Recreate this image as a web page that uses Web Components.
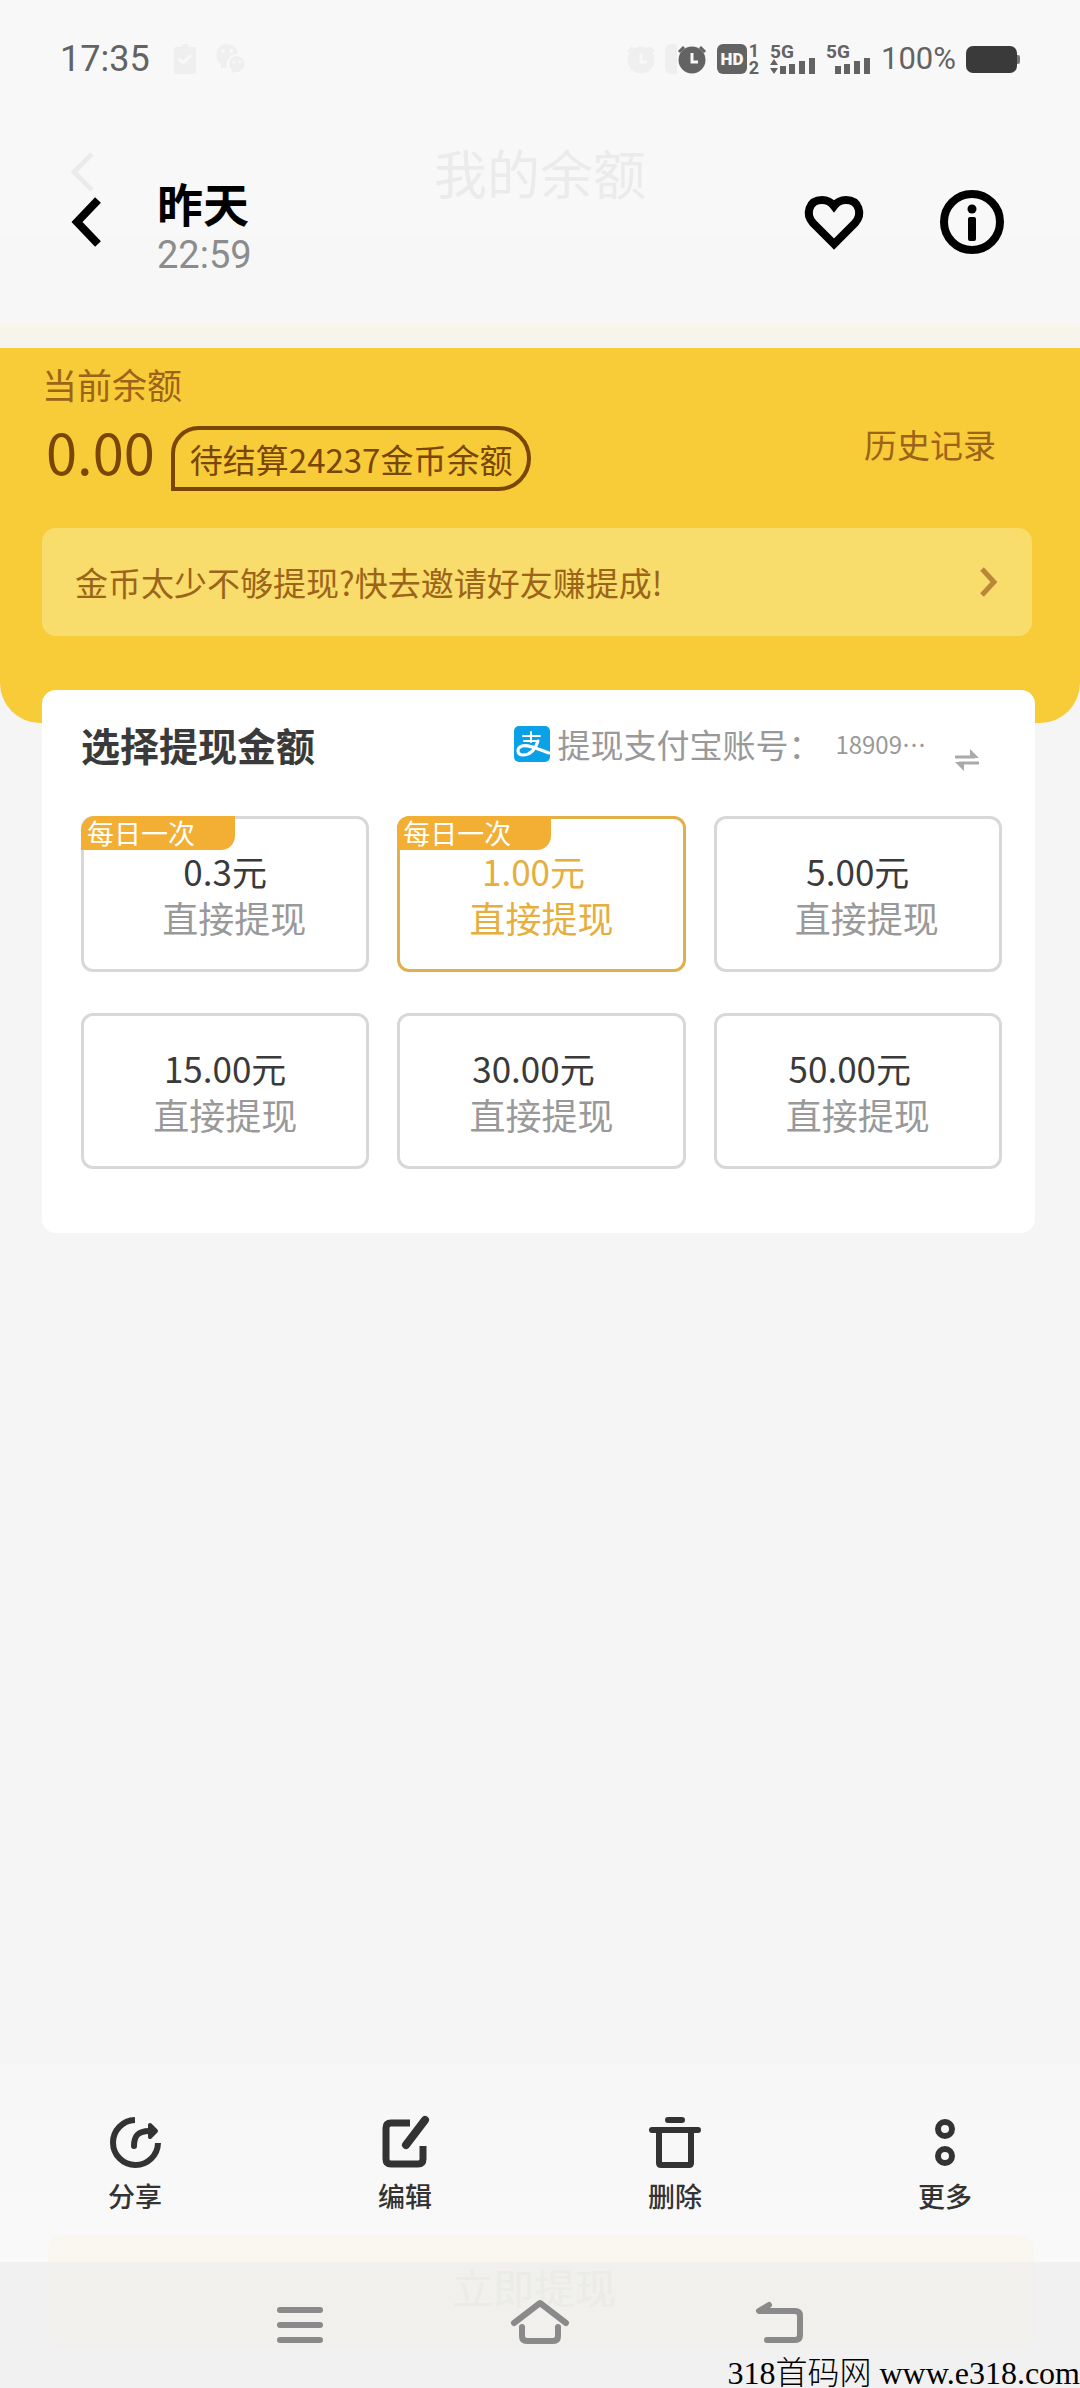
<!DOCTYPE html>
<html lang="zh-CN">
<head>
<meta charset="utf-8">
<meta name="viewport" content="width=device-width, initial-scale=1">
<title>我的余额</title>
<style>
  body {
    margin: 0;
    background: #f5f5f5;
    color: #3a3a3a;
    font-family: "Noto Sans CJK SC", "Noto Sans", sans-serif;
  }
</style>
</head>
<body>
<photo-viewer>
  <status-bar time="17:35" battery="100%"></status-bar>
  <viewer-header day="昨天" time="22:59" ghost="我的余额"></viewer-header>

  <balance-panel amount="0.00">
    <span slot="label">当前余额</span>
    <span slot="pending">待结算24237金币余额</span>
    <span slot="history">历史记录</span>
    <span slot="invite">金币太少不够提现?快去邀请好友赚提成!</span>
  </balance-panel>

  <withdraw-card account="18909…">
    <span slot="title">选择提现金额</span>
    <span slot="account">提现支付宝账号：</span>
    <amount-tile price="0.3元" badge="每日一次" label-end>直接提现</amount-tile>
    <amount-tile price="1.00元" badge="每日一次" price-start selected>直接提现</amount-tile>
    <amount-tile price="5.00元" label-end>直接提现</amount-tile>
    <amount-tile price="15.00元">直接提现</amount-tile>
    <amount-tile price="30.00元" price-start>直接提现</amount-tile>
    <amount-tile price="50.00元" price-start>直接提现</amount-tile>
  </withdraw-card>

  <viewer-footer slot="footer" ghost="立即提现">
    <tool-button icon="share">分享</tool-button>
    <tool-button icon="edit">编辑</tool-button>
    <tool-button icon="trash">删除</tool-button>
    <tool-button icon="more">更多</tool-button>
  </viewer-footer>
  <water-mark slot="footer">318首码网 www.e318.com</water-mark>
</photo-viewer>

<script>
const ALARM = `
  <circle cx="15" cy="16" r="13.5" fill="currentColor"/>
  <path d="M2 8l5-5M28 8l-5-5" stroke="currentColor" stroke-width="3"/>
  <path d="M15 9v9h6" fill="none" stroke="#f8f8f8" stroke-width="3"/>`

// name: [width, height, markup]
const ICONS = {
  ghosts: [51, 30, `${ALARM}
    <path d="M45 0h6v30h-6a6 6 0 0 1-6-6V6a6 6 0 0 1 6-6z" fill="currentColor"/>`],
  alarm: [30, 30, ALARM],
  hd: [43, 30, `
    <rect width="30" height="30" rx="6" fill="currentColor"/>
    <text x="15" y="21" text-anchor="middle" font-size="17" font-weight="900" fill="#f8f8f8">HD</text>
    <text x="37" y="13" text-anchor="middle" font-size="18" font-weight="700" fill="currentColor">1</text>
    <text x="37" y="30" text-anchor="middle" font-size="18" font-weight="700" fill="currentColor">2</text>`],
  signalData: [46, 30, `
    <text x="0" y="14" font-size="19" font-weight="700" fill="currentColor">5G</text>
    <path d="M0 21l4-6 4 6zM0 24h8l-4 6z" fill="currentColor"/>
    <path d="M13 30v-8M22 30v-10M32 30v-13M42 30v-16" stroke="currentColor" stroke-width="6"/>`],
  signal: [45, 30, `
    <text x="0" y="14" font-size="19" font-weight="700" fill="currentColor">5G</text>
    <path d="M12 30v-8M21 30v-10M31 30v-13M41 30v-16" stroke="currentColor" stroke-width="6"/>`],
  battery: [54, 28, `
    <rect width="51" height="27" y="1" rx="7" fill="#3a3a3a"/>
    <path d="M51 10h1a2 2 0 0 1 2 2v5a2 2 0 0 1-2 2h-1z" fill="#777"/>`],
  clipboard: [22, 30, `
    <path d="M2 3h5l2-3h4l2 3h5q2 0 2 2v23q0 2-2 2H2q-2 0-2-2V5q0-2 2-2z" fill="currentColor"/>
    <path d="M5 15l4 4 8-8" fill="none" stroke="#f8f8f8" stroke-width="3"/>`],
  wechat: [30, 30, `
    <path d="M11 0a11 11 0 0 1 11 10a10 10 0 0 0-11 13l-6 2v-5A11 11 0 0 1 11 0z" fill="currentColor"/>
    <path d="M21 12a8 8 0 1 1-1 16l-5 1 1-3a8 8 0 0 1 5-14z" fill="currentColor"/>
    <g fill="#f8f8f8"><circle cx="7" cy="7" r="2"/><circle cx="15" cy="7" r="2"/><circle cx="18" cy="18" r="1.500"/><circle cx="24" cy="18" r="1.500"/></g>`],
  back: [30, 50, `<path d="M26 3L5 25l21 22" fill="none" stroke="currentColor" stroke-width="8"/>`],
  ghostBack: [26, 42, `<path d="M22 3L4 21l18 18" fill="none" stroke="currentColor" stroke-width="5"/>`],
  heart: [60, 56, `
    <path d="M30 50L9 29C1 20 5 6 18 6c5 0 9 2 12 6c3-4 7-6 12-6c13 0 17 14 9 23z" fill="none" stroke="currentColor" stroke-width="8"/>`],
  info: [64, 64, `
    <circle cx="32" cy="32" r="28" fill="none" stroke="currentColor" stroke-width="8"/>
    <circle cx="32" cy="19" r="4.500" fill="currentColor"/>
    <rect x="28" y="27" width="8" height="24" rx="2" fill="currentColor"/>`],
  chevron: [18, 32, `<path d="M3 3l12 13L3 29" fill="none" stroke="currentColor" stroke-width="5"/>`],
  alipay: [36, 36, `
    <rect width="36" height="36" rx="5" fill="#0ba1e8"/>
    <g fill="none" stroke="#fff" stroke-linecap="round">
      <path d="M17 6v10M9 10h17M10 15h14" stroke-width="2"/>
      <path d="M24 15C21 24 16 29 9 29C3 29 2 22 8 20C14 18 24 23 35 27" stroke-width="3"/>
    </g>`],
  swap: [26, 22, `
    <path d="M1 8h20M25 14H5" stroke="currentColor" stroke-width="3"/>
    <path d="M16 0l9 9h-9zM10 22l-9-9h9z" fill="currentColor"/>`],
  share: [52, 52, `
    <g fill="none" stroke="currentColor" stroke-width="6">
      <path d="M26 4a22.500 22.500 0 1 0 23 23"/>
      <path d="M25 30C25 19 30 15 40 15" stroke-linecap="round"/>
    </g>
    <path d="M41 9l6 6-6 6z" fill="currentColor" stroke="currentColor" stroke-width="4" stroke-linejoin="round"/>`],
  edit: [52, 52, `
    <g fill="none" stroke="currentColor">
      <path d="M31 7H12q-5 0-5 5v31q0 5 5 5h27q5 0 5-5V30" stroke-width="7"/>
      <path d="M27 29L46 4" stroke-width="8" stroke-linecap="round"/>
    </g>`],
  trash: [52, 52, `
    <g fill="none" stroke="currentColor" stroke-width="6" stroke-linecap="round">
      <path d="M19 4h14M3 14h46M10 15v32q0 2 2 2h28q2 0 2-2V15"/>
    </g>`],
  more: [52, 52, `
    <g fill="none" stroke="currentColor" stroke-width="6">
      <circle cx="26" cy="13" r="7"/><circle cx="26" cy="40" r="7"/>
    </g>`],
  menu: [46, 46, `
    <path d="M3 8h40M3 23h40M3 38h40" stroke="currentColor" stroke-width="6" stroke-linecap="round"/>`],
  home: [58, 46, `
    <path d="M3 21L29 1l26 20M11 25v9q0 5 5 5h26q5 0 5-5v-9" fill="none" stroke="currentColor" stroke-width="6" stroke-linecap="round" stroke-linejoin="round"/>`],
  undo: [50, 46, `
    <path d="M14 3L4 9h36q5 0 5 5v19q0 5-5 5H12" fill="none" stroke="currentColor" stroke-width="6" stroke-linecap="round" stroke-linejoin="round"/>`]
}

class BaseElement extends HTMLElement {
  constructor() {
    super()
    this.shadow = this.attachShadow({mode: 'open'})
  }

  attr(name) {
    return this.getAttribute(name) || ''
  }

  connectedCallback() {
    this.shadow.innerHTML = this.template()
  }
}

class UiIcon extends BaseElement {
  template() {
    const [width, height, body] = ICONS[this.attr('name')]
    return `
      <style>
        :host { display: block; flex: none; }
        svg { display: block; overflow: visible; font-family: Roboto, sans-serif; }
      </style>
      <svg width="${width}" height="${height}" viewBox="0 0 ${width} ${height}" aria-hidden="true">${body}</svg>
    `
  }
}

class PhotoViewer extends BaseElement {
  template() {
    return `
      <style>
        :host {
          display: flex;
          flex-direction: column;
          position: relative;
          min-height: 100vh;
        }
        main { flex: 1; }
      </style>
      <main><slot></slot></main>
      <slot name="footer"></slot>
    `
  }
}

class StatusBar extends BaseElement {
  template() {
    return `
      <style>
        :host {
          display: flex;
          align-items: center;
          gap: 10px;
          padding: 39px 60px 0;
          height: 40px;
          background: #f8f8f8;
          color: #636363;
          font-family: Roboto, sans-serif;
        }
        time { font-size: 36px; line-height: 40px; }
        .ghost { color: #efefef; }
        .notices { display: flex; gap: 20px; margin-left: 14px; }
        .system { display: flex; margin-left: auto; }
        .battery { font-size: 31px; line-height: 40px; }
      </style>
      <time>${this.attr('time')}</time>
      <div class="notices ghost">
        <ui-icon name="clipboard"></ui-icon>
        <ui-icon name="wechat"></ui-icon>
      </div>
      <div class="system">
        <ui-icon name="ghosts" class="ghost"></ui-icon>
        <ui-icon name="alarm"></ui-icon>
      </div>
      <ui-icon name="hd"></ui-icon>
      <ui-icon name="signalData"></ui-icon>
      <ui-icon name="signal"></ui-icon>
      <span class="battery">${this.attr('battery')}</span>
      <ui-icon name="battery"></ui-icon>
    `
  }
}

class ViewerHeader extends BaseElement {
  template() {
    return `
      <style>
        :host {
          display: flex;
          align-items: center;
          position: relative;
          padding: 87px 76px 70px 72px;
          background: linear-gradient(#f8f8f8 157px, #f7f7f7 158px 240px, #f7f5ea 250px, #f5f3ef);
          color: #000;
        }
        button {
          padding: 0;
          border: 0;
          background: none;
          color: inherit;
        }
        .date { margin: 14px auto 0 55px; }
        h1 {
          margin: 0;
          font-size: 46px;
          line-height: 44px;
          font-weight: 700;
        }
        time {
          display: block;
          margin-top: 8px;
          color: #8c8c8c;
          font: 38px/46px Roboto, sans-serif;
        }
        .like { margin-right: 76px; }
        /* the page underneath shows through the bar */
        .ghost {
          position: absolute;
          inset: 60px 0 auto;
          color: #ebebeb;
          text-align: center;
          font-size: 53px;
          line-height: 66px;
        }
        .ghost ui-icon { position: absolute; left: 70px; top: 12px; }
      </style>
      <div class="ghost"><ui-icon name="ghostBack"></ui-icon>${this.attr('ghost')}</div>
      <button aria-label="返回"><ui-icon name="back"></ui-icon></button>
      <div class="date">
        <h1>${this.attr('day')}</h1>
        <time>${this.attr('time')}</time>
      </div>
      <button class="like" aria-label="收藏"><ui-icon name="heart"></ui-icon></button>
      <button aria-label="详情"><ui-icon name="info"></ui-icon></button>
    `
  }
}

class BalancePanel extends BaseElement {
  template() {
    return `
      <style>
        :host {
          display: block;
          padding: 13px 48px 87px 42px;
          border-radius: 0 0 40px 40px;
          background: #f8cc38;
          color: #9c6418;
          font-size: 33px;
        }
        a { color: inherit; text-decoration: none; }
        .label { font-size: 35px; line-height: 46px; }
        .row {
          display: flex;
          align-items: flex-start;
          margin-top: 19px;
        }
        .amount {
          margin: 0 16px 0 4px;
          color: #7a4606;
          font-size: 56px;
          line-height: 50px;
        }
        .pending {
          padding: 2px 15px 0;
          border: 4px solid;
          border-radius: 28px 33px 33px 0;
          color: #7a4606;
          line-height: 55px;
        }
        .history { margin: 0 36px 0 auto; line-height: 36px; }
        .invite {
          display: flex;
          align-items: center;
          justify-content: space-between;
          margin-top: 37px;
          padding: 0 35px 0 33px;
          border-radius: 14px;
          background: #f8dc6c;
          line-height: 108px;
        }
        .invite ui-icon { color: #b88838; }
      </style>
      <div class="label"><slot name="label"></slot></div>
      <div class="row">
        <span class="amount">${this.attr('amount')}</span>
        <span class="pending"><slot name="pending"></slot></span>
        <a class="history" href="#history"><slot name="history"></slot></a>
      </div>
      <a class="invite" href="#invite">
        <slot name="invite"></slot>
        <ui-icon name="chevron"></ui-icon>
      </a>
    `
  }
}

class WithdrawCard extends BaseElement {
  template() {
    return `
      <style>
        :host {
          display: block;
          position: relative;
          margin: -33px 45px 0 42px;
          padding: 27px 33px 64px 39px;
          border-radius: 14px;
          background: #fff;
        }
        header { display: flex; align-items: center; height: 54px; }
        h2 {
          margin: 0 auto 0 0;
          font-size: 39px;
          line-height: 54px;
          font-weight: 700;
        }
        .account {
          margin: 0 14px 0 7px;
          color: #999;
          font-size: 33px;
          line-height: 54px;
        }
        .number {
          color: #999;
          font-size: 24px;
          line-height: 54px;
        }
        button {
          align-self: flex-end;
          margin: 0 22px 0 28px;
          padding: 0;
          border: 0;
          background: none;
          color: #aaa;
        }
        .grid {
          display: grid;
          grid-template-columns: repeat(3, 1fr);
          gap: 41px 28px;
          margin-top: 45px;
        }
      </style>
      <header>
        <h2><slot name="title"></slot></h2>
        <ui-icon name="alipay"></ui-icon>
        <span class="account"><slot name="account"></slot></span>
        <span class="number">${this.attr('account')}</span>
        <button aria-label="更换账号"><ui-icon name="swap"></ui-icon></button>
      </header>
      <div class="grid"><slot></slot></div>
    `
  }
}

class AmountTile extends BaseElement {
  template() {
    const badge = this.attr('badge')
    return `
      <style>
        :host { display: block; }
        button {
          display: block;
          box-sizing: border-box;
          position: relative;
          width: 100%;
          height: 156px;
          padding: 29px 0 32px;
          border: 3px solid #d8d8d8;
          border-radius: 12px;
          background: none;
          color: #999;
          font: inherit;
          font-size: 36px;
          line-height: 46px;
          text-align: center;
        }
        span { display: block; }
        .price { color: #3a3a3a; font-size: 35px; }
        :host([label-end]) .label { padding-left: 18px; }
        :host([price-start]) .price { padding-right: 16px; }
        :host([selected]) button { border-color: #e0b04a; }
        :host([selected]) .price, :host([selected]) .label { color: #e6ae3e; }
        .badge {
          position: absolute;
          left: -3px;
          top: -3px;
          box-sizing: border-box;
          width: 154px;
          padding-left: 6px;
          border-radius: 14px 0 14px 0;
          background: #f2af34;
          color: #fff;
          font-size: 27px;
          line-height: 34px;
          text-align: left;
        }
      </style>
      <button aria-pressed="${this.hasAttribute('selected')}">
        ${badge && `<span class="badge">${badge}</span>`}
        <span class="price">${this.attr('price')}</span>
        <span class="label"><slot></slot></span>
      </button>
    `
  }
}

class ViewerFooter extends BaseElement {
  template() {
    return `
      <style>
        :host { display: block; position: relative; }
        .tools {
          display: grid;
          grid-template-columns: repeat(4, 1fr);
          padding: 52px 0 48px;
          background: linear-gradient(#f7f7f7, #f9f9f9);
        }
        nav {
          display: flex;
          justify-content: center;
          align-items: center;
          height: 126px;
          background: #f1f1f1;
        }
        nav button {
          display: flex;
          justify-content: center;
          position: relative;
          width: 240px;
          padding: 0;
          border: 0;
          background: none;
          color: #8a8a8a;
        }
        .ghost {
          position: absolute;
          inset: auto 46px 40px 48px;
          height: 113px;
          padding-right: 14px;
          border-radius: 14px;
          background: linear-gradient(rgba(245, 215, 120, .08) 27px, rgba(240, 220, 130, .04) 27px);
          color: #ebebe8;
          text-align: center;
          font-size: 41px;
          line-height: 102px;
          box-sizing: border-box;
        }
      </style>
      <div class="tools"><slot></slot></div>
      <nav>
        <div class="ghost">${this.attr('ghost')}</div>
        <button aria-label="菜单"><ui-icon name="menu"></ui-icon></button>
        <button aria-label="主页"><ui-icon name="home"></ui-icon></button>
        <button aria-label="返回"><ui-icon name="undo"></ui-icon></button>
      </nav>
    `
  }
}

class ToolButton extends BaseElement {
  template() {
    return `
      <style>
        :host { display: block; }
        button {
          display: flex;
          flex-direction: column;
          align-items: center;
          gap: 10px;
          width: 100%;
          height: 98px;
          padding: 0;
          border: 0;
          background: none;
          color: #333;
          font: inherit;
          font-size: 27px;
          line-height: 36px;
          font-weight: 500;
        }
      </style>
      <button><ui-icon name="${this.attr('icon')}"></ui-icon><slot></slot></button>
    `
  }
}

class WaterMark extends BaseElement {
  template() {
    return `
      <style>
        :host {
          position: absolute;
          right: 0;
          bottom: 0;
          color: #000;
          font: 300 32px/30px "Liberation Serif", "Noto Sans CJK SC", serif;
        }
      </style>
      <slot></slot>
    `
  }
}

customElements.define('ui-icon', UiIcon)
customElements.define('photo-viewer', PhotoViewer)
customElements.define('status-bar', StatusBar)
customElements.define('viewer-header', ViewerHeader)
customElements.define('balance-panel', BalancePanel)
customElements.define('withdraw-card', WithdrawCard)
customElements.define('amount-tile', AmountTile)
customElements.define('viewer-footer', ViewerFooter)
customElements.define('tool-button', ToolButton)
customElements.define('water-mark', WaterMark)
</script>
</body>
</html>
